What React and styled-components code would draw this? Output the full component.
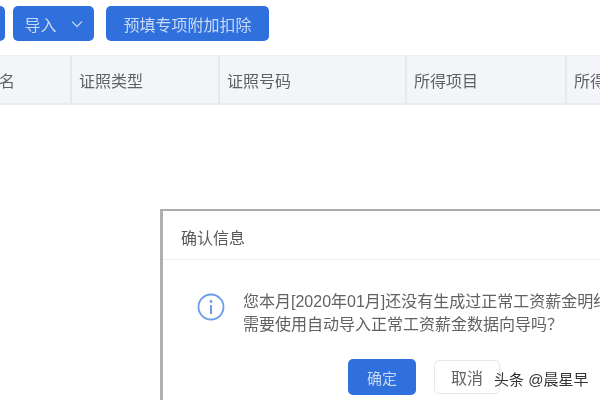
import React from "react";
import styled, { createGlobalStyle } from "styled-components";

const GlobalStyle = createGlobalStyle`
  html, body {
    margin: 0;
    background: #fff;
    font-family: "Liberation Sans", "Noto Sans CJK SC", sans-serif;
  }
`;

const Page = styled.div`
  position: relative;
  width: 600px;
  height: 400px;
  overflow: hidden;
  background: #fff;
  filter: blur(0.6px);
`;

const Toolbar = styled.div`
  display: flex;
  align-items: center;
  height: 35px;
  padding-top: 6px;
  margin-left: -40px;
`;

const ToolButton = styled.div`
  display: flex;
  align-items: center;
  justify-content: center;
  box-sizing: border-box;
  height: 35px;
  width: ${(p) => p.$width}px;
  margin-right: ${(p) => p.$gap}px;
  gap: 14px;
  background: #2f70dc;
  border-radius: 5px;
  color: #c9daf5;
  font-size: 16px;
`;

const TableHead = styled.div`
  display: flex;
  height: 50px;
  margin-top: 14px;
  margin-left: -24px;
  background: #f3f5f9;
  border-top: 1px solid #eceef1;
  border-bottom: 2px solid #e9ebee;
  box-sizing: border-box;
`;

const HeadCell = styled.div`
  display: flex;
  align-items: center;
  flex: none;
  box-sizing: border-box;
  width: ${(p) => p.$width}px;
  padding-left: 7px;
  border-right: 2px solid #e6e8ec;
  color: #5f6166;
  font-size: 16px;
`;

const Dialog = styled.div`
  position: absolute;
  left: 160px;
  top: 209px;
  width: 620px;
  height: 220px;
  box-sizing: border-box;
  background: #fff;
  border-top: 2px solid #ababab;
  border-left: 3px solid #b0b0b0;
`;

const DialogHeader = styled.div`
  display: flex;
  align-items: center;
  box-sizing: border-box;
  height: 49px;
  padding: 3px 0 0 18px;
  border-bottom: 1px solid #eeeeee;
  color: #5a5a5a;
  font-size: 16px;
`;

const DialogBody = styled.div`
  display: flex;
  gap: 18px;
  padding: 30px 0 0 34px;
`;

const IconWrap = styled.div`
  flex: none;
  height: 28px;
  margin-top: 3px;
`;

const Message = styled.div`
  color: #626262;
  font-size: 16px;
  line-height: 23px;
  white-space: nowrap;
`;

const DialogFooter = styled.div`
  display: flex;
  align-items: center;
  gap: 18px;
  padding: 23px 0 0 185px;
`;

const PrimaryButton = styled.div`
  display: flex;
  align-items: center;
  justify-content: center;
  width: 68px;
  height: 36px;
  background: #2f70dc;
  border-radius: 5px;
  color: #c9daf5;
  font-size: 15px;
`;

const PlainButton = styled.div`
  display: flex;
  align-items: center;
  justify-content: center;
  box-sizing: border-box;
  width: 66px;
  height: 34px;
  border: 1px solid #e8e8e8;
  border-radius: 5px;
  background: #fff;
  color: #626262;
  font-size: 16px;
`;

const Watermark = styled.div`
  position: absolute;
  left: 494px;
  top: 370px;
  color: #333;
  font-size: 15px;
  line-height: 20px;
  white-space: nowrap;
`;

const columns = [
  { label: "姓名", width: 96 },
  { label: "证照类型", width: 148 },
  { label: "证照号码", width: 187 },
  { label: "所得项目", width: 160 },
  { label: "所得项目", width: 160 },
];

const Chevron = () => (
  <svg width="12" height="8" viewBox="0 0 12 8" fill="none" stroke="#b7cdf1" strokeWidth="1.3">
    <path d="M1 1.5l5 5 5-5" />
  </svg>
);

const InfoIcon = () => (
  <svg width="28" height="28" viewBox="0 0 28 28" fill="none">
    <circle cx="14" cy="14" r="12.5" stroke="#6b9ce8" strokeWidth="1.8" />
    <circle cx="14" cy="8.5" r="1.4" fill="#6b9ce8" />
    <path d="M14 12v9" stroke="#6b9ce8" strokeWidth="2" />
  </svg>
);

const App = () => {
  return (
    <Page>
      <GlobalStyle />
      <Toolbar>
        <ToolButton $width={45} $gap={8} />
        <ToolButton $width={81} $gap={12}>
          导入
          <Chevron />
        </ToolButton>
        <ToolButton $width={163} $gap={0}>预填专项附加扣除</ToolButton>
      </Toolbar>
      <TableHead>
        {columns.map((col, i) => (
          <HeadCell key={i} $width={col.width}>{col.label}</HeadCell>
        ))}
      </TableHead>
      <Dialog>
        <DialogHeader>确认信息</DialogHeader>
        <DialogBody>
          <IconWrap>
            <InfoIcon />
          </IconWrap>
          <Message>
            您本月[2020年01月]还没有生成过正常工资薪金明细，
            <br />
            需要使用自动导入正常工资薪金数据向导吗？
          </Message>
        </DialogBody>
        <DialogFooter>
          <PrimaryButton>确定</PrimaryButton>
          <PlainButton>取消</PlainButton>
        </DialogFooter>
      </Dialog>
      <Watermark>头条 @晨星早</Watermark>
    </Page>
  );
};

export default App;
